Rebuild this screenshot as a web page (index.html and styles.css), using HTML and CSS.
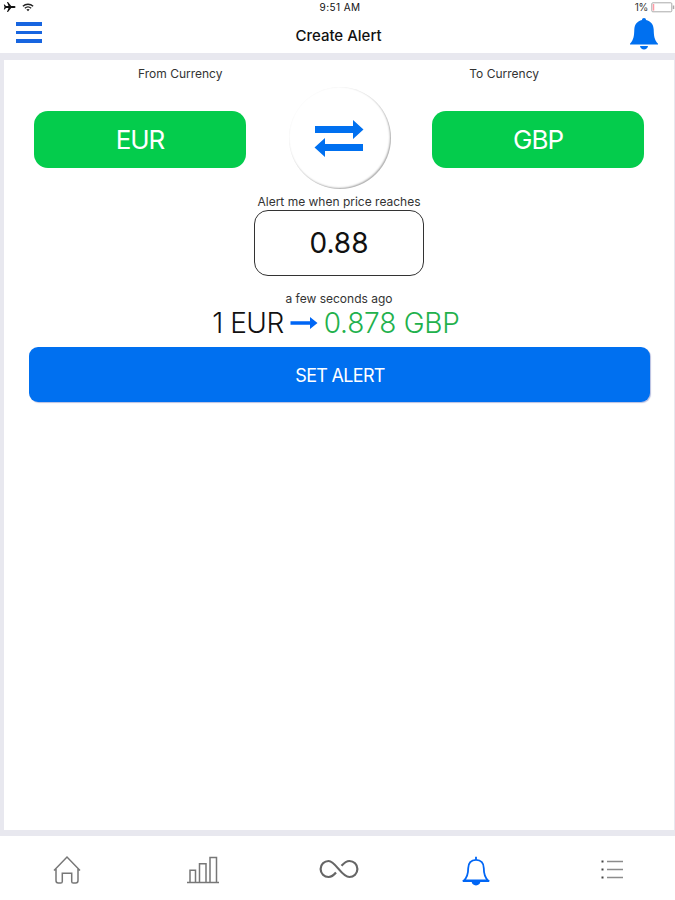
FILE: index.html
```html
<!DOCTYPE html>
<html lang="en">
<head>
    <meta charset="UTF-8">
    <meta name="viewport" content="width=device-width, initial-scale=1.0">
    <title>Create Alert</title>
    <link rel="stylesheet" href="styles.css">
</head>
<body>
    <!-- Status bar -->
    <div class="status">
        <div class="status-left">
            <svg width="13" height="12" viewBox="0 0 13 12"><path d="M12.5 6c0-.6-.7-1-1.6-1H8.2L5 1H4l1.5 4H3L1.600 3.500H.8L1.500 6 .8 8.500h.8L3 7h2.500L4 11h1l3.200-4h2.700c.9 0 1.600-.4 1.600-1z" fill="#111"/></svg>
            <svg width="12" height="9" viewBox="0 0 13 10" fill="none" stroke="#222" stroke-width="1.500"><path d="M.8 3.600C4 .6 9 .6 12.200 3.600M3 5.900c2-1.800 5-1.800 7 0"/><path d="M4.700 7.300c1-.9 2.600-.9 3.600 0L6.500 9.300z" fill="#222" stroke="none"/></svg>
        </div>
        <div class="time">9:51 AM</div>
        <div class="status-right">
            <span>1%</span>
            <svg width="24" height="11" viewBox="0 0 24 11"><rect x=".8" y=".8" width="20" height="9" rx="1" fill="#fff" stroke="#aaa"/><path d="M2.500 2v6.600" stroke="#ff9aa5" stroke-width="1.500"/><path d="M22.500 3.500v3.600" stroke="#aaa" stroke-width="1.500"/></svg>
        </div>
    </div>

    <!-- Header -->
    <div class="header">
        <div class="menu"><span></span><span></span><span></span></div>
        <div class="title">Create Alert</div>
        <svg class="bell" width="28" height="32" viewBox="0 0 28 32" fill="#0070f0"><path d="M14 0c1.300 0 2 .8 2 2 4.800 1 7.500 4.500 7.700 9.500.2 6.500.5 10 4.300 14.300v.7H0v-.7c3.800-4.300 4.100-7.800 4.300-14.300C4.500 6.500 7.200 3 12 2c0-1.200.7-2 2-2z"/><path d="M10 28h8c-.4 2.200-2 3.600-4 3.600S10.400 30.200 10 28z"/></svg>
    </div>

    <!-- Alert form -->
    <div class="content">
        <div class="card">
            <div class="labels">
                <span class="from">From Currency</span>
                <span class="to">To Currency</span>
            </div>
            <div class="currencies">
                <button class="currency">EUR</button>
                <button class="swap">
                    <svg width="50" height="38" viewBox="0 0 50 38" fill="#0070f0"><path d="M1 6h38V0l10.500 9.500L39 19v-6H1zM49 24H11v-6L.5 27.500 11 37v-6h38z"/></svg>
                </button>
                <button class="currency">GBP</button>
            </div>
            <div class="price-label">Alert me when price reaches</div>
            <div class="price">0.88</div>
            <div class="updated">a few seconds ago</div>
            <div class="rate">
                <span class="rate-from">1 EUR</span>
                <svg width="28" height="14" viewBox="0 0 28 14" fill="#0066f5"><path d="M.5 5.300H20V1l7.500 6L20 13V8.700H.5z"/></svg>
                <span class="rate-to">0.878 GBP</span>
            </div>
            <button class="set-alert">SET ALERT</button>
        </div>
    </div>

    <!-- Tab bar -->
    <div class="tabs">
        <div class="tab">
            <svg width="30" height="30" viewBox="0 0 30 30"><path d="M2 15.500 15 2l13 13.500M4 14v11.500c0 1.500.8 2.500 2.300 2.500h2.400c1 0 1.600-.6 1.600-1.600v-8.200h9.400v8.200c0 1 .6 1.600 1.600 1.600h2.400c1.500 0 2.300-1 2.300-2.500V14"/></svg>
        </div>
        <div class="tab">
            <svg width="32" height="30" viewBox="0 0 32 30"><path d="M0 27.500h32M3 27.500V15.200h5.500v12.300M12.500 27.500V8.800h6.500v18.700M23 27.500V2.500h6.500v25"/></svg>
        </div>
        <div class="tab infinity">
            <svg width="40" height="22" viewBox="0 0 40 22"><path d="M17 14.500C14.500 17.500 12.500 19 9.600 19A8 8 0 0 1 9.600 3C16.500 3 22.500 19 30.400 19A8 8 0 0 0 30.400 3C27.500 3 25.300 4.700 22.500 7.800"/></svg>
        </div>
        <div class="tab active">
            <svg width="28" height="30" viewBox="0 0 28 30"><path d="M14 .8v3c-5 0-7.800 3.400-7.800 8.400 0 6.300-.8 9-4.200 12.100h24c-3.400-3.100-4.200-5.800-4.200-12.100 0-5-2.800-8.400-7.800-8.400M1 25h26"/><path d="M10.500 25.500h7c-.2 1.700-1.600 3-3.500 3s-3.300-1.300-3.500-3z" fill="#0066f5"/></svg>
        </div>
        <div class="tab">
            <svg width="24" height="20" viewBox="0 0 24 20"><path d="M7 2.500H23M7 10.500H23M7 18.500H23" stroke="#8c8c8c"/><path d="M1.500 2.500h2M1.500 10.500h2M1.500 18.500h2" stroke="#444" stroke-width="2"/></svg>
        </div>
    </div>
</body>
</html>
```

FILE: styles.css
```css
* {
    box-sizing: border-box;
}

body {
    margin: 0;
    height: 900px;
    display: flex;
    flex-direction: column;
    background: #fff;
    color: #111;
    font-family: Inter, "Liberation Sans", sans-serif;
    overflow: hidden;
}

svg {
    display: block;
    flex: none;
}

button {
    border: none;
    padding: 0;
    font-family: inherit;
    cursor: pointer;
}

/* Status bar */
.status {
    height: 14px;
    display: grid;
    grid-template-columns: 1fr auto 1fr;
    align-items: center;
    padding: 0 0 0 3px;
    font-size: 10px;
}

.status-left,
.status-right {
    display: flex;
    align-items: center;
    gap: 6px;
}

.status-right {
    justify-content: flex-end;
    gap: 3px;
    color: #333;
    letter-spacing: -0.3px;
}

.time {
    padding-left: 2px;
    letter-spacing: 0.4px;
}

/* Header */
.header {
    height: 39px;
    display: flex;
    justify-content: space-between;
    align-items: center;
    padding: 0 17px 0 16px;
}

.menu {
    width: 26px;
    display: flex;
    flex-direction: column;
    gap: 5px;
    margin-bottom: 2px;
}

.menu span {
    height: 3.500px;
    background: #1765e0;
}

.title {
    font-size: 15px;
    font-weight: 500;
    padding: 3px 0 0 5px;
}

.bell {
    margin-top: 1px;
}

/* Card */
.content {
    height: 783px;
    background: #e8e8ef;
    padding: 7px 1px 6px 4px;
}

.card {
    height: 100%;
    background: #fff;
    display: flex;
    flex-direction: column;
    align-items: center;
}

.labels {
    width: 100%;
    height: 27px;
    display: flex;
    justify-content: space-between;
    align-items: center;
    padding: 0 135px 0 134px;
    font-size: 12px;
    color: #333;
}

.currencies {
    width: 100%;
    height: 102px;
    display: flex;
    justify-content: space-between;
    align-items: center;
    padding: 0 30px;
}

.currency {
    width: 212px;
    height: 57px;
    margin-top: 2px;
    border-radius: 14px;
    background: #04cc4c;
    color: #fff;
    font-size: 26px;
    letter-spacing: -1px;
}

.swap {
    width: 102px;
    height: 102px;
    margin-left: 2px;
    padding: 2px 2px 0 0;
    border-radius: 50%;
    background: #fff;
    box-shadow: inset -1px -1px 2px rgba(0, 0, 0, 0.35);
    display: flex;
    align-items: center;
    justify-content: center;
}

.price-label {
    height: 21px;
    line-height: 26px;
    font-size: 12px;
    color: #333;
}

.price {
    width: 170px;
    height: 66px;
    border: 1px solid #333;
    border-radius: 14px;
    display: flex;
    align-items: center;
    justify-content: center;
    font-size: 28px;
}

.updated {
    margin-top: 14px;
    line-height: 17px;
    font-size: 12px;
    color: #333;
}

.rate {
    height: 33px;
    display: flex;
    align-items: center;
    gap: 6px;
    padding-right: 6px;
    font-size: 28px;
    font-weight: 300;
    line-height: 33px;
}

.rate-from {
    letter-spacing: -0.500px;
}

.rate-to {
    color: #22b14c;
    letter-spacing: -0.200px;
}

.rate svg {
    margin-top: -2px;
}

.set-alert {
    width: 621px;
    height: 55px;
    margin: 7px 0 0 1px;
    padding-left: 1px;
    padding-top: 1px;
    border-radius: 9px;
    background: #0070f0;
    box-shadow: 1px 1px 1px #b9bfe0;
    color: #fff;
    font-size: 18px;
    letter-spacing: -0.700px;
}

/* Tab bar */
.tabs {
    height: 64px;
    display: grid;
    grid-template-columns: repeat(5, 136px);
    margin-left: -1px;
}

.tab {
    display: flex;
    align-items: center;
    justify-content: center;
    padding-top: 4px;
}

.tab svg {
    fill: none;
    stroke: #777;
    stroke-width: 1.500;
}

.tab.infinity {
    padding-top: 2px;
}

.infinity svg {
    stroke: #666;
    stroke-width: 2.200;
}

.tab.active {
    padding: 5px 0 0 2px;
}

.active svg {
    stroke: #0066f5;
    stroke-width: 1.800;
}

.tab:last-child {
    padding: 2px 0 0 1px;
}
```
